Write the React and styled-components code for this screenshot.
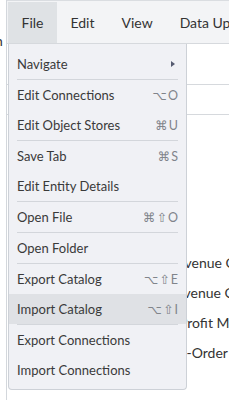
import React from "react";
import styled, { createGlobalStyle } from "styled-components";

const GlobalStyle = createGlobalStyle`
  html, body {
    margin: 0;
    padding: 0;
    background: #ffffff;
  }
  body {
    font-family: Lato, "Open Sans", "DejaVu Sans", sans-serif;
    color: #333;
  }
`;

const tabs = ["File", "Edit", "View", "Data Upload"];

const menuGroups = [
  [{ label: "Navigate", submenu: true }],
  [
    { label: "Edit Connections", keys: "⌥O" },
    { label: "Edit Object Stores", keys: "⌘U" },
  ],
  [
    { label: "Save Tab", keys: "⌘S" },
    { label: "Edit Entity Details" },
  ],
  [{ label: "Open File", keys: "⌘⇧O" }],
  [{ label: "Open Folder" }],
  [
    { label: "Export Catalog", keys: "⌥⇧E" },
    { label: "Import Catalog", keys: "⌥⇧I", active: true },
  ],
  [{ label: "Export Connections" }, { label: "Import Connections" }],
];

const rows = [
  { text: "Revenue Cost", indent: 162 },
  { text: "Revenue Cost", indent: 161 },
  { text: "Profit Margin", indent: 172 },
  { text: "Pre-Order Count", indent: 159 },
];

const App = () => {
  return (
    <>
      <GlobalStyle />
      <Page>
        <LeftPanel>
          <Clipped>n</Clipped>
        </LeftPanel>
        <Main>
          <MenuBar>
            {tabs.map((t, i) => (
              <MenuTab key={t} active={i === 0}>
                {t}
              </MenuTab>
            ))}
          </MenuBar>
          <Content>
            <HeaderRow />
            <List>
              {rows.map((r, i) => (
                <ListRow key={i} indent={r.indent}>
                  {r.text}
                </ListRow>
              ))}
            </List>
          </Content>
        </Main>

        {/* File dropdown */}
        <Dropdown>
          {menuGroups.map((group, gi) => (
            <React.Fragment key={gi}>
              {gi > 0 && <Separator />}
              {group.map((item) => (
                <Item key={item.label} active={item.active}>
                  <span>{item.label}</span>
                  {item.keys && <Keys>{item.keys}</Keys>}
                  {item.submenu && <Arrow />}
                </Item>
              ))}
            </React.Fragment>
          ))}
        </Dropdown>
      </Page>
    </>
  );
};

export default App;

const Page = styled.div`
  position: relative;
  display: flex;
  width: 229px;
  height: 400px;
  overflow: hidden;
`;

const LeftPanel = styled.div`
  width: 6px;
  flex-shrink: 0;
  border-right: 1px solid #d3d7dc;
  overflow: hidden;
  position: relative;
`;

const Clipped = styled.span`
  display: block;
  margin-top: 32px;
  margin-left: -5px;
  font-size: 14px;
  color: #333;
`;

const Main = styled.div`
  flex: 1;
  display: flex;
  flex-direction: column;
  min-width: 0;
`;

const MenuBar = styled.div`
  display: flex;
  height: 42px;
  padding-left: 1px;
  background: #f3f4f6;
  border-top: 1px solid #dadde1;
  border-bottom: 1px solid #d6d9dd;
  white-space: nowrap;
`;

const MenuTab = styled.div`
  display: flex;
  align-items: center;
  padding: 0 13.5px;
  margin-top: 1px;
  font-size: 14px;
  color: #333;
  background: ${(p) => (p.active ? "#dfe2e5" : "transparent")};
`;

const Content = styled.div`
  display: flex;
  flex-direction: column;
`;

const HeaderRow = styled.div`
  margin-top: 40px;
  height: 29px;
  border-top: 1px solid #d6d9dd;
  border-bottom: 1px solid #d6d9dd;
`;

const List = styled.div`
  margin-top: 133px;
  display: flex;
  flex-direction: column;
`;

const ListRow = styled.div`
  height: 30px;
  line-height: 30px;
  padding-left: ${(p) => p.indent}px;
  font-size: 14px;
  color: #333;
  white-space: nowrap;
`;

const Dropdown = styled.div`
  position: absolute;
  top: 44px;
  left: 8px;
  width: 177px;
  padding: 5px 0 4px;
  background: #f0f1f5;
  border: 1px solid #cdd1d7;
  border-top: none;
  border-radius: 0 0 4px 4px;
`;

const Item = styled.div`
  display: flex;
  align-items: center;
  justify-content: space-between;
  height: 30px;
  padding: 0 8px;
  font-size: 13px;
  color: #3a3a3a;
  background: ${(p) => (p.active ? "#dfe1e5" : "transparent")};
`;

const Keys = styled.span`
  font-family: Lato, "DejaVu Sans", sans-serif;
  font-size: 12.5px;
  color: #80848b;
  letter-spacing: 1px;
  margin-right: -1px;
`;

const Arrow = styled.span`
  width: 0;
  height: 0;
  margin-right: 3px;
  border-top: 3.5px solid transparent;
  border-bottom: 3.5px solid transparent;
  border-left: 4px solid #555b70;
`;

const Separator = styled.div`
  height: 1px;
  margin: 0 8px;
  background: #d3d6db;
`;
